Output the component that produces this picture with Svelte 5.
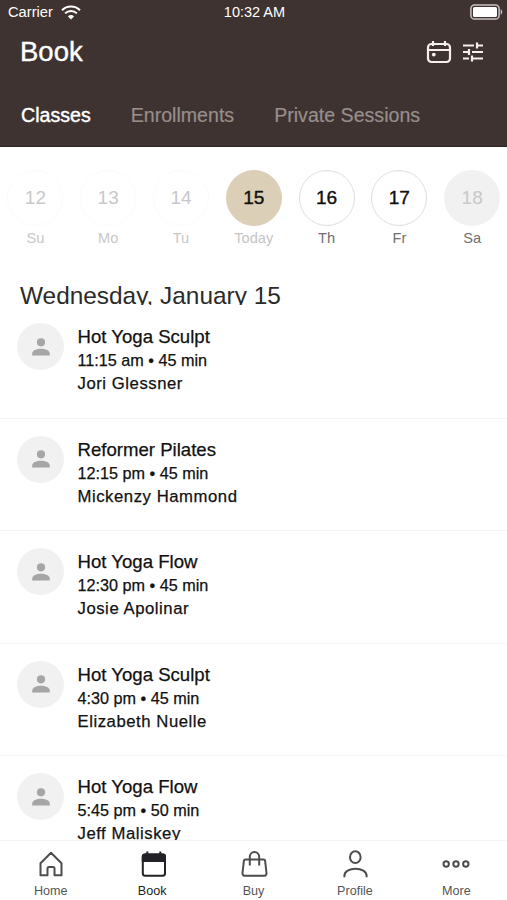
<script>
  const tabs = ['Classes', 'Enrollments', 'Private Sessions'];
  let activeTab = 'Classes';

  const days = [
    { date: 12, label: 'Su', state: 'past' },
    { date: 13, label: 'Mo', state: 'past' },
    { date: 14, label: 'Tu', state: 'past' },
    { date: 15, label: 'Today', state: 'today' },
    { date: 16, label: 'Th', state: 'open' },
    { date: 17, label: 'Fr', state: 'open' },
    { date: 18, label: 'Sa', state: 'closed' }
  ];

  const classes = [
    { name: 'Hot Yoga Sculpt', time: '11:15 am • 45 min', teacher: 'Jori Glessner' },
    { name: 'Reformer Pilates', time: '12:15 pm • 45 min', teacher: 'Mickenzy Hammond' },
    { name: 'Hot Yoga Flow', time: '12:30 pm • 45 min', teacher: 'Josie Apolinar' },
    { name: 'Hot Yoga Sculpt', time: '4:30 pm • 45 min', teacher: 'Elizabeth Nuelle' },
    { name: 'Hot Yoga Flow', time: '5:45 pm • 50 min', teacher: 'Jeff Maliskey' }
  ];

  const nav = ['Home', 'Book', 'Buy', 'Profile', 'More'];
</script>

<div class="app">
  <header>
    <div class="status">
      <div class="carrier">
        <span>Carrier</span>
        <svg width="20" height="15" viewBox="0 0 20 15" fill="none" stroke="#fff" stroke-width="2">
          <path d="M1 5.2a13 13 0 0 1 18 0M4.1 8.4a8.5 8.5 0 0 1 11.8 0" />
          <path d="M10 14.6 6.9 11.4a4.5 4.5 0 0 1 6.2 0z" fill="#fff" stroke="none" />
        </svg>
      </div>
      <span class="clock">10:32 AM</span>
      <svg class="battery" width="33" height="16" viewBox="0 0 33 16">
        <rect x=".9" y=".9" width="28.2" height="14.2" rx="3.6" fill="none" stroke="#c9c3c1" stroke-width="1.5" />
        <rect x="3" y="3" width="24" height="10" rx="1.6" fill="#fff" />
        <path d="M30.7 5.3c2 .8 2 4.6 0 5.4z" fill="#c9c3c1" />
      </svg>
    </div>

    <div class="title">
      <h1>Book</h1>
      <div class="actions">
        <svg width="26" height="24" viewBox="0 0 26 24" fill="none" stroke="#f6efed" stroke-width="2.2">
          <rect x="2" y="4" width="22" height="18" rx="3.5" />
          <path d="M2 10h22M7 1v5M19 1v5" />
          <circle cx="7.8" cy="14.6" r="1.9" fill="#f6efed" stroke="none" />
        </svg>
        <svg width="20" height="20" viewBox="0 0 20 20" fill="none" stroke="#f6efed" stroke-width="2.2">
          <path d="M0 3.5h11M14 3.5h6M14 .5v6M0 10h6M6 7v6M9 10h11M0 16.5h6M9 16.5h11M9 13.5v6" />
        </svg>
      </div>
    </div>

    <div class="tabs">
      {#each tabs as tab}
        <button class:active={tab === activeTab} on:click={() => (activeTab = tab)}>{tab}</button>
      {/each}
    </div>
  </header>

  <div class="week">
    {#each days as day}
      <div class="day {day.state}">
        <div class="circle">{day.date}</div>
        <span>{day.label}</span>
      </div>
    {/each}
  </div>

  <main>
    <h2>Wednesday, January 15</h2>
    {#each classes as item}
      <div class="class">
        <div class="avatar">
          <svg width="18" height="18" viewBox="0 0 18 18" fill="#a6a6a6">
            <circle cx="9" cy="4.3" r="4.1" />
            <path d="M.2 17.5v-1.8C.2 12.3 4.8 10.8 9 10.8s8.8 1.5 8.8 4.9v1.8z" />
          </svg>
        </div>
        <div class="info">
          <h3>{item.name}</h3>
          <p class="time">{item.time}</p>
          <p class="teacher">{item.teacher}</p>
        </div>
      </div>
    {/each}
  </main>

  <nav>
    {#each nav as item}
      <div class="item" class:current={item === 'Book'}>
        <svg width="30" height="30" viewBox="0 0 30 30" fill="none" stroke="#4d4d4f" stroke-width="2">
          {#if item === 'Home'}
            <path d="M4.5 14.3 15 3.8l10.5 10.500V26.200h-7v-6.700a1.500 1.500 0 0 0-1.500-1.500h-4a1.500 1.500 0 0 0-1.500 1.500v6.700h-7z" stroke-linejoin="round" />
          {:else if item === 'Book'}
            <rect x="5.800" y="5.500" width="22.200" height="21.200" rx="2.500" stroke="#222226" />
            <path d="M4.800 13V7.500a3 3 0 0 1 3-3h1.500v-2h2v2h11v-2h2v2h1.700a3 3 0 0 1 3 3V13z" fill="#222226" stroke="none" />
          {:else if item === 'Buy'}
            <path d="M6.400 10.400h18.200a1.500 1.500 0 0 1 1.500 1.300l1.400 12.300a2.500 2.500 0 0 1-2.500 2.800h-19a2.500 2.500 0 0 1-2.500-2.800l1.400-12.300a1.500 1.500 0 0 1 1.500-1.300z" />
            <path d="M10.800 16.500V7.800a4.700 4.900 0 0 1 9.400 0v8.700" />
          {:else if item === 'Profile'}
            <ellipse cx="15.300" cy="8.200" rx="5.300" ry="5.900" />
            <path d="M4.400 28.300v-1.500c0-4.200 5-7 11.100-7s11.100 2.800 11.100 7v1.500" />
          {:else}
            <circle cx="5.200" cy="15" r="2.700" />
            <circle cx="15" cy="15" r="2.700" />
            <circle cx="24.800" cy="15" r="2.700" />
          {/if}
        </svg>
        <span>{item}</span>
      </div>
    {/each}
  </nav>
</div>

<style>
  :global(body) {
    margin: 0;
    background: #fff;
  }

  .app {
    display: flex;
    flex-direction: column;
    width: 507px;
    height: 900px;
    overflow: hidden;
    font-family: 'Liberation Sans', Arial, sans-serif;
    color: #111;
    background: #fff;
  }

  h1,
  h2,
  h3,
  p {
    margin: 0;
    font-weight: normal;
  }

  svg {
    display: block;
    flex: none;
  }

  header {
    flex: none;
    box-sizing: border-box;
    height: 147px;
    background: #3e3331;
    border-bottom: 1px solid #302422;
    color: #fff;
  }

  .status {
    display: grid;
    grid-template-columns: 1fr auto 1fr;
    align-items: center;
    height: 24px;
    padding: 0 4px 0 8px;
    font-size: 14.7px;
  }

  .carrier {
    display: flex;
    align-items: center;
    gap: 8px;
  }

  .clock {
    margin-right: 2px;
    font-size: 14.5px;
  }

  .battery {
    justify-self: end;
  }

  .title {
    display: flex;
    align-items: center;
    justify-content: space-between;
    height: 55px;
    padding: 0 24px 0 20px;
  }

  h1 {
    font-size: 27.5px;
    -webkit-text-stroke: 0.4px;
  }

  .actions {
    display: flex;
    align-items: center;
    gap: 11px;
  }

  .tabs {
    display: flex;
    gap: 40px;
    padding: 24px 21px 0;
  }

  button {
    padding: 0;
    border: 0;
    background: none;
    font: 19.6px/25px 'Liberation Sans', Arial, sans-serif;
    color: #978e8b;
    -webkit-text-stroke: 0.2px;
  }

  button.active {
    color: #fff;
    -webkit-text-stroke: 0.4px;
  }

  .week {
    display: flex;
    flex: none;
    height: 110px;
    margin-left: -1px;
    padding-top: 23px;
  }

  .day {
    display: flex;
    flex: none;
    flex-direction: column;
    align-items: center;
    width: 72.8px;
    font-size: 14.6px;
    line-height: 20px;
    color: #6f6f6f;
  }

  .circle {
    display: flex;
    align-items: center;
    justify-content: center;
    box-sizing: border-box;
    width: 56px;
    height: 56px;
    margin-bottom: 2px;
    border: 1px solid #dedede;
    border-radius: 50%;
    font-size: 19px;
    color: #111;
    -webkit-text-stroke: 0.4px;
  }

  .past,
  .past .circle {
    color: #c8c8c8;
  }

  .past .circle {
    border-color: #fbfbfb;
    -webkit-text-stroke: 0;
  }

  .today {
    color: #c5c5c5;
  }

  .today .circle {
    background: #dccfb7;
    border-color: #dccfb7;
  }

  .closed .circle {
    background: #f1f1f1;
    border-color: #f1f1f1;
    color: #c8c8c8;
    -webkit-text-stroke: 0;
  }

  main {
    flex: 1;
    min-height: 0;
    overflow: hidden;
  }

  /* the line box is shorter than the glyphs, so descenders are cut */
  h2 {
    height: 25px;
    margin-bottom: 1px;
    padding-left: 20px;
    overflow: hidden;
    font-size: 24.4px;
    line-height: 32px;
    color: #2b2b2b;
  }

  .class {
    display: flex;
    box-sizing: border-box;
    height: 112.5px;
    padding: 17px 17px 0;
    border-bottom: 1px solid #f3f3f3;
  }

  .avatar {
    display: flex;
    align-items: center;
    justify-content: center;
    flex: none;
    width: 47px;
    height: 47px;
    margin-right: 13.5px;
    border-radius: 50%;
    background: #f1f1f1;
  }

  .info {
    padding-top: 2px;
  }

  h3 {
    font-size: 18.6px;
    line-height: 24px;
    -webkit-text-stroke: 0.25px;
  }

  .time {
    font-size: 16.2px;
    line-height: 23px;
    -webkit-text-stroke: 0.25px;
  }

  .teacher {
    font-size: 16.7px;
    line-height: 23px;
    letter-spacing: 0.55px;
    -webkit-text-stroke: 0.25px;
  }

  nav {
    display: flex;
    flex: none;
    box-sizing: border-box;
    height: 60px;
    border-top: 1px solid #f3f3f3;
    background: #fff;
  }

  .item {
    display: flex;
    flex: 1;
    flex-direction: column;
    align-items: center;
    padding-top: 8px;
    font-size: 12.6px;
    line-height: 25px;
    color: #555;
  }

  .current {
    color: #222;
  }
</style>
